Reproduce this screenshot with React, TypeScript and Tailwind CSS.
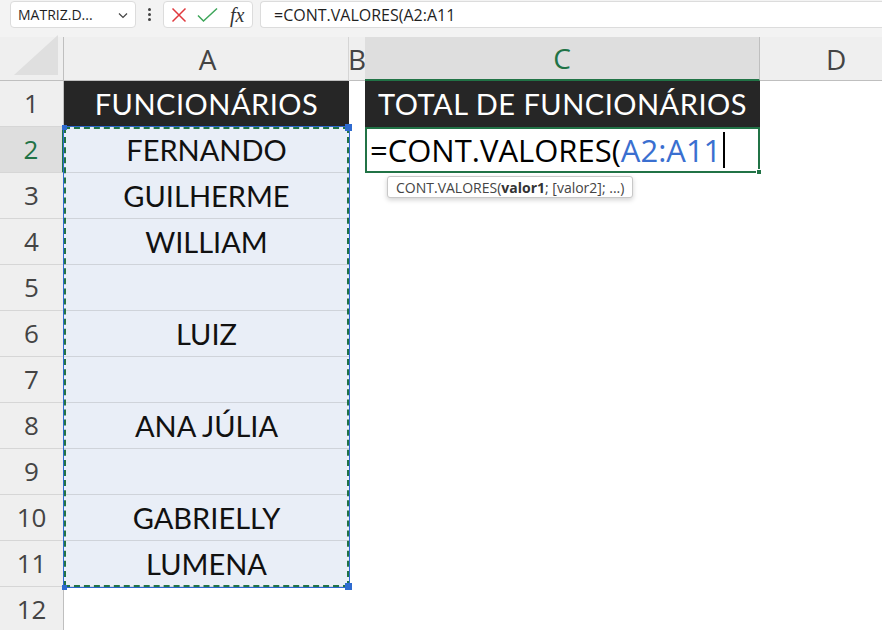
import React from 'react';

const names = ['FERNANDO', 'GUILHERME', 'WILLIAM', '', 'LUIZ', '', 'ANA JÚLIA', '', 'GABRIELLY', 'LUMENA'];

const ui = { fontFamily: '"Open Sans", "Noto Sans", sans-serif' };
const cell = { fontFamily: 'Lato, "Noto Sans", sans-serif' };

function Toolbar() {
  return (
    <div className="flex h-[37px] items-start bg-[#f3f3f3]" style={ui}>
      <div className="ml-[10px] mt-[1px] flex h-[27px] w-[126px] items-center justify-between rounded-[4px] border border-[#dcdcdc] bg-white pl-[7px] pr-[5px] text-[14px] text-[#1f1f1f]">
        <span>MATRIZ.D...</span>
        <svg width="14" height="14" viewBox="0 0 14 14" fill="none" stroke="#444" strokeWidth="1.2">
          <path d="M3 5.5l4 4 4-4" />
        </svg>
      </div>
      <div className="flex h-[28px] w-[27px] flex-col items-center justify-center gap-[2px]">
        <span className="h-[3px] w-[3px] rounded-full bg-[#444]" />
        <span className="h-[3px] w-[3px] rounded-full bg-[#444]" />
        <span className="h-[3px] w-[3px] rounded-full bg-[#444]" />
      </div>
      <div className="mt-[1px] flex h-[27px] w-[90px] items-center rounded-[4px] border border-[#dcdcdc] bg-white pl-[7px]">
        <svg width="16" height="16" viewBox="0 0 16 16" fill="none" stroke="#e0393e" strokeWidth="1.5">
          <path d="M1.5 1.5l13 13M14.5 1.5l-13 13" />
        </svg>
        <svg className="ml-[10px]" width="21" height="16" viewBox="0 0 21 16" fill="none" stroke="#3ea65a" strokeWidth="1.5">
          <path d="M1 8.5l5.5 5.5L20 1.5" />
        </svg>
        <span className="ml-[12px] text-[20px] italic leading-none text-[#333]" style={{ fontFamily: '"Liberation Serif", serif' }}>fx</span>
      </div>
      <div className="ml-[7px] mt-[1px] flex h-[27px] flex-1 items-center rounded-l-[4px] border border-r-0 border-[#dcdcdc] bg-white pl-[13px] text-[16px] text-[#1f1f1f]">
        =CONT.VALORES(A2:A11
      </div>
    </div>
  );
}

export default function App() {
  return (
    <div className="h-[630px] w-[882px] overflow-hidden bg-white">
      <Toolbar />
      <div className="grid grid-cols-[64px_285px_16px_395px_1fr] grid-rows-[44px_repeat(12,46px)]">
        {/* cabeçalho das colunas */}
        <div className="flex items-end justify-end border-b border-r border-[#bfbfbf] bg-[#efefef] pb-[5px] pr-[5px]">
          <svg width="44" height="40" viewBox="0 0 44 40">
            <polygon points="44,0 44,40 0,40" fill="#dfdfdf" />
          </svg>
        </div>
        <div className="flex items-center justify-center border-b border-r border-[#bfbfbf] border-r-[#d5d5d5] bg-[#efefef] pl-[3px] text-[28px] text-[#444]" style={ui}>A</div>
        <div className="flex items-center justify-center overflow-hidden border-b border-[#bfbfbf] bg-[#efefef] text-[28px] text-[#444]" style={ui}>B</div>
        <div className="flex items-center justify-center border-b-2 border-r border-b-[#217346] border-r-[#bfbfbf] bg-[#dedede] text-[28px] text-[#217346]" style={ui}>C</div>
        <div className="flex items-center border-b border-[#bfbfbf] bg-[#efefef] pl-[66px] text-[28px] text-[#444]" style={ui}>D</div>

        {/* linha 1 */}
        <div className="flex items-center justify-center border-b border-r border-[#d6d6d6] border-r-[#bfbfbf] bg-[#efefef] text-[26px] text-[#444]" style={ui}>1</div>
        <div className="flex items-center justify-center bg-[#262626] text-[29px] tracking-[0.5px] text-white" style={cell}>FUNCIONÁRIOS</div>
        <div />
        <div className="flex items-center justify-center bg-[#262626] text-[29px] tracking-[0.5px] text-white" style={cell}>TOTAL DE FUNCIONÁRIOS</div>
        <div />

        {/* linha 2 */}
        <div className="flex items-center justify-center border-b border-r-2 border-[#d6d6d6] border-r-[#217346] bg-[#dedede] text-[26px] text-[#217346]" style={ui}>2</div>
        <div className="relative row-span-10 flex flex-col bg-[#e9eef7]">
          {names.map((n, i) => (
            <div key={i} className="flex h-[46px] items-center justify-center border-b border-[#cfd3da] text-[29px] text-[#111] last:border-b-0" style={cell}>
              {n}
            </div>
          ))}
          <div className="pointer-events-none absolute inset-0 border-2 border-dashed border-[#217346] outline outline-1 outline-[#2f6bd0]" />
          <span className="absolute -left-[2px] -top-[2px] h-[5px] w-[5px] bg-[#2f6bd0]" />
          <span className="absolute -right-[3px] -top-[3px] h-[7px] w-[7px] bg-[#2f6bd0]" />
          <span className="absolute -bottom-[3px] -left-[2px] h-[5px] w-[5px] bg-[#2f6bd0]" />
          <span className="absolute -bottom-[3px] -right-[3px] h-[7px] w-[7px] bg-[#2f6bd0]" />
        </div>
        <div />
        <div className="relative flex items-center border-2 border-[#217346] pl-[3px] text-[31px] text-black" style={ui}>
          <span>=CONT.VALORES(</span>
          <span className="text-[#3a6fd0]">A2:A11</span>
          <span className="ml-[2px] h-[36px] w-[1.5px] bg-black" />
          <span className="absolute -bottom-[4px] -right-[4px] h-[6px] w-[6px] border border-white bg-[#217346]" />
          <div className="absolute left-[20px] top-[47px] z-10 flex h-[22px] items-center whitespace-nowrap rounded-[3px] border border-[#c8c8c8] bg-white px-[8px] text-[14px] text-[#444] shadow-[0_2px_5px_rgba(0,0,0,0.18)]" style={ui}>
            CONT.VALORES(<b className="text-[#333]">valor1</b>; [valor2]; ...)
          </div>
        </div>
        <div />

        {/* linhas 3-12 */}
        {[3, 4, 5, 6, 7, 8, 9, 10, 11, 12].map((r) => (
          <React.Fragment key={r}>
            <div className="col-start-1 flex items-center justify-center border-b border-r border-[#d6d6d6] border-r-[#bfbfbf] bg-[#efefef] text-[26px] text-[#444]" style={ui}>{r}</div>
            {r === 12 && <div className="col-start-2" />}
          </React.Fragment>
        ))}
      </div>
    </div>
  );
}
